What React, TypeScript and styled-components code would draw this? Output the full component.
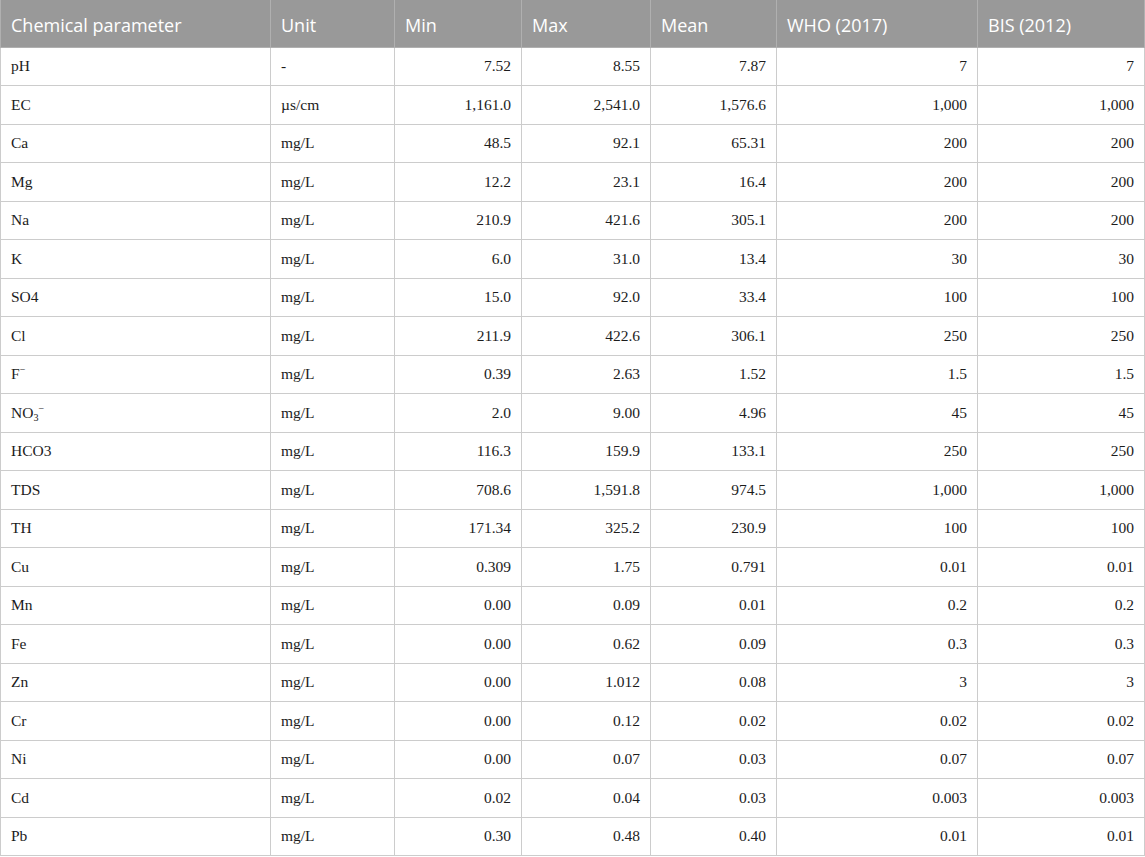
import React from "react";
import styled, { createGlobalStyle } from "styled-components";

const Global = createGlobalStyle`
  html, body { margin: 0; padding: 0; background: #ffffff; }
  body { font-family: "Liberation Serif", serif; }
`;

const Frame = styled.div`
  width: 1145px;
  box-sizing: border-box;
  padding-right: 1px;
`;

const Table = styled.table`
  border-collapse: collapse;
  table-layout: fixed;
  width: 1144px;
  color: #1c1c1c;
`;

const HeadCell = styled.th<{ $w: number }>`
  width: ${(p) => p.$w}px;
  height: 47px;
  box-sizing: border-box;
  background: #999999;
  color: #ffffff;
  font-family: "Open Sans", "Noto Sans", sans-serif;
  font-weight: 400;
  font-size: 18px;
  text-align: left;
  padding: 3px 10px 0;
  border: 1px solid #b0b0b0;
  border-top: none;
`;

const Row = styled.tr`
  height: 38.5px;
`;

const Cell = styled.td<{ $num?: boolean }>`
  box-sizing: border-box;
  font-family: "Liberation Serif", "Times New Roman", serif;
  font-size: 15.5px;
  padding: 0 10px;
  border: 1px solid #cccccc;
  text-align: ${(p) => (p.$num ? "right" : "left")};
  white-space: nowrap;
`;

const Sup = styled.sup`
  font-size: 0.65em;
  vertical-align: 0.55em;
  line-height: 0;
`;

const Sub = styled.sub`
  font-size: 0.65em;
  vertical-align: -0.25em;
  line-height: 0;
`;

const headers: [string, number][] = [
  ["Chemical parameter", 270],
  ["Unit", 124],
  ["Min", 127],
  ["Max", 129],
  ["Mean", 126],
  ["WHO (2017)", 201],
  ["BIS (2012)", 167],
];

type R = [React.ReactNode, string, string, string, string, string, string];

const rows: R[] = [
  ["pH", "-", "7.52", "8.55", "7.87", "7", "7"],
  ["EC", "µs/cm", "1,161.0", "2,541.0", "1,576.6", "1,000", "1,000"],
  ["Ca", "mg/L", "48.5", "92.1", "65.31", "200", "200"],
  ["Mg", "mg/L", "12.2", "23.1", "16.4", "200", "200"],
  ["Na", "mg/L", "210.9", "421.6", "305.1", "200", "200"],
  ["K", "mg/L", "6.0", "31.0", "13.4", "30", "30"],
  ["SO4", "mg/L", "15.0", "92.0", "33.4", "100", "100"],
  ["Cl", "mg/L", "211.9", "422.6", "306.1", "250", "250"],
  [<>F<Sup>−</Sup></>, "mg/L", "0.39", "2.63", "1.52", "1.5", "1.5"],
  [<>NO<Sub>3</Sub><Sup>−</Sup></>, "mg/L", "2.0", "9.00", "4.96", "45", "45"],
  ["HCO3", "mg/L", "116.3", "159.9", "133.1", "250", "250"],
  ["TDS", "mg/L", "708.6", "1,591.8", "974.5", "1,000", "1,000"],
  ["TH", "mg/L", "171.34", "325.2", "230.9", "100", "100"],
  ["Cu", "mg/L", "0.309", "1.75", "0.791", "0.01", "0.01"],
  ["Mn", "mg/L", "0.00", "0.09", "0.01", "0.2", "0.2"],
  ["Fe", "mg/L", "0.00", "0.62", "0.09", "0.3", "0.3"],
  ["Zn", "mg/L", "0.00", "1.012", "0.08", "3", "3"],
  ["Cr", "mg/L", "0.00", "0.12", "0.02", "0.02", "0.02"],
  ["Ni", "mg/L", "0.00", "0.07", "0.03", "0.07", "0.07"],
  ["Cd", "mg/L", "0.02", "0.04", "0.03", "0.003", "0.003"],
  ["Pb", "mg/L", "0.30", "0.48", "0.40", "0.01", "0.01"],
];

export default function App() {
  return (
    <>
      <Global />
      <Frame>
        <Table>
          <thead>
            <tr>
              {headers.map(([h, w]) => (
                <HeadCell key={h} $w={w}>
                  {h}
                </HeadCell>
              ))}
            </tr>
          </thead>
          <tbody>
            {rows.map((r, i) => (
              <Row key={i}>
                {r.map((c, j) => (
                  <Cell key={j} $num={j >= 2}>
                    {c}
                  </Cell>
                ))}
              </Row>
            ))}
          </tbody>
        </Table>
      </Frame>
    </>
  );
}
